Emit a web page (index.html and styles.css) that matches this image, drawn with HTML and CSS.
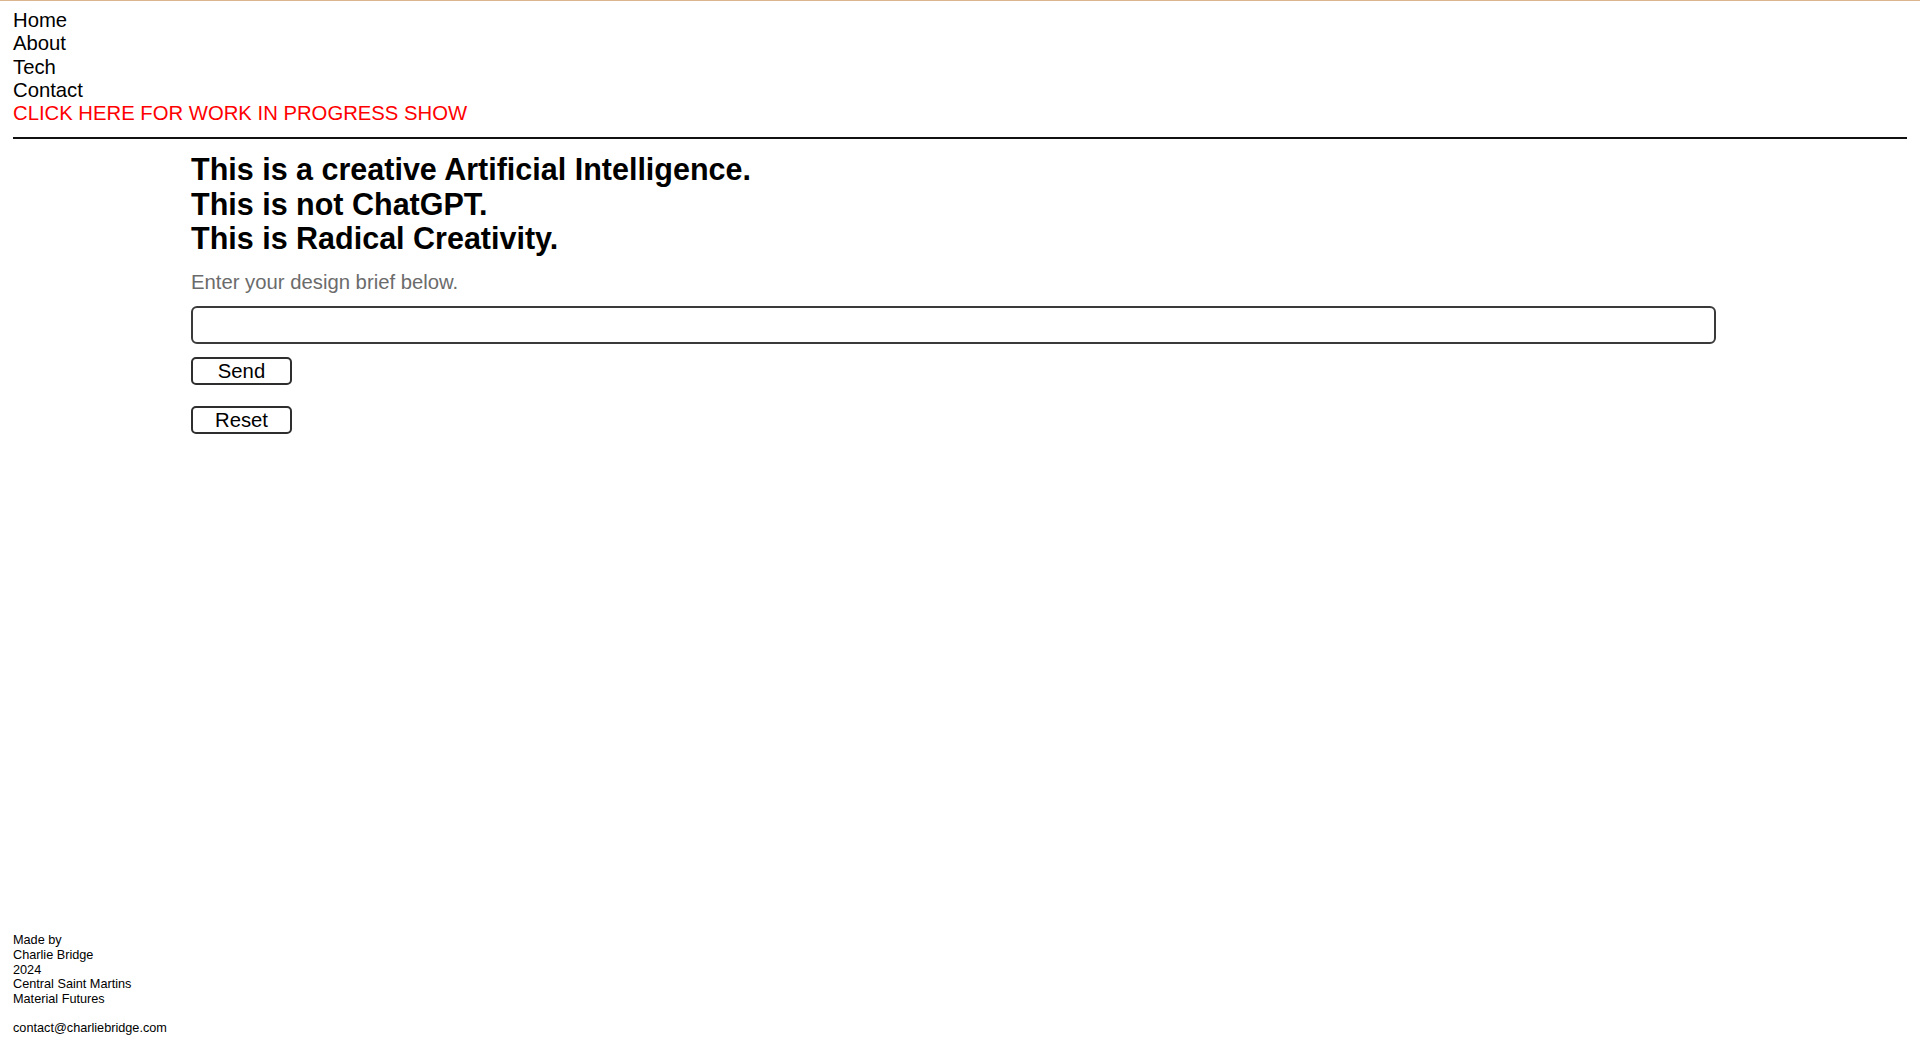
FILE: index.html
```html
<!DOCTYPE html>
<html lang="en">
<head>
    <meta charset="UTF-8">
    <title>Radical Creativity</title>
    <meta content="width=device-width, initial-scale=1" name="viewport">
    <link rel="stylesheet" href="styles.css">
</head>
<body>
<div class="page">
    <header class="header">
        <nav class="nav">
            <a href="#">Home</a>
            <a href="#">About</a>
            <a href="#">Tech</a>
            <a href="#">Contact</a>
            <a href="#" class="wip">CLICK HERE FOR WORK IN PROGRESS SHOW</a>
        </nav>
        <div class="hr"></div>
    </header>
    <main class="main">
        <h1 class="title">
            <span>This is a creative Artificial Intelligence.</span>
            <span>This is not ChatGPT.</span>
            <span>This is Radical Creativity.</span>
        </h1>
        <p class="hint">Enter your design brief below.</p>
        <form class="brief" onsubmit="return false">
            <input class="brief-input" type="text">
            <button class="btn" type="submit">Send</button>
            <button class="btn" type="reset">Reset</button>
        </form>
    </main>
    <footer class="footer">
        <p>Made by<br>Charlie Bridge<br>2024<br>Central Saint Martins<br>Material Futures</p>
        <p class="mail">contact@charliebridge.com</p>
    </footer>
</div>
</body>
</html>
```

FILE: styles.css
```css
* {
    box-sizing: border-box;
}

html, body {
    margin: 0;
}

body {
    font-family: "Liberation Sans", Arial, Helvetica, sans-serif;
    color: #000;
    background: #fff;
    border-top: 1px solid #d9b68e;
}

.page {
    display: flex;
    flex-direction: column;
    min-height: calc(100vh - 1px);
}

.header {
    padding: 8px 13px 0;
}

.nav {
    display: flex;
    flex-direction: column;
    align-items: flex-start;
    font-size: 20.3px;
    line-height: 23.3px;
}

.nav a {
    color: #000;
    text-decoration: none;
}

.nav .wip {
    color: #ff0000;
}

.hr {
    height: 2px;
    background-color: #111;
    margin-top: 12px;
}

.main {
    padding-left: 191px;
}

.title {
    display: flex;
    flex-direction: column;
    margin: 13px 0 0;
    font-size: 30.5px;
    font-weight: bold;
    line-height: 34.5px;
}

.hint {
    margin: 15px 0 0;
    font-size: 20.3px;
    line-height: 23px;
    color: #6b6b6b;
}

.brief {
    display: flex;
    flex-direction: column;
    align-items: flex-start;
    margin-top: 12px;
}

.brief-input {
    width: 1525px;
    height: 38px;
    border: 2px solid #3a3a3a;
    border-radius: 6px;
    padding: 0 8px;
    font-family: inherit;
    font-size: 18px;
    background: #fff;
    outline: none;
}

.btn {
    width: 101px;
    height: 28px;
    margin-top: 13px;
    padding: 0;
    border: 2px solid #2e2e2e;
    border-radius: 5px;
    background: #fff;
    color: #000;
    font-family: inherit;
    font-size: 20.3px;
    line-height: 22px;
    cursor: pointer;
}

.btn + .btn {
    margin-top: 21px;
}

.footer {
    margin-top: auto;
    padding: 0 13px 12px;
    font-size: 12.7px;
    line-height: 14.7px;
}

.footer p {
    margin: 0;
}

.footer .mail {
    margin-top: 14.7px;
}
```
